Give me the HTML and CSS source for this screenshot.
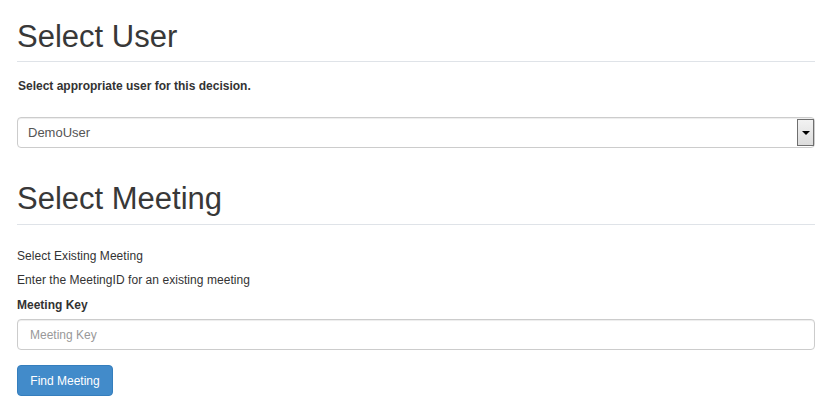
FILE: index.html
```html
<!DOCTYPE html>
<html>
<head>
<meta charset="utf-8">
<link rel="stylesheet" href="styles.css">
</head>
<body>
<div class="page">
  <h2 class="title">Select User</h2>
  <p class="lead-bold">Select appropriate user for this decision.</p>
  <div class="select">
    <span class="select-value">DemoUser</span>
    <span class="select-btn"><span class="arrow"></span></span>
  </div>

  <h2 class="title title-second">Select Meeting</h2>
  <p class="line first">Select Existing Meeting</p>
  <p class="line">Enter the MeetingID for an existing meeting</p>
  <label class="label">Meeting Key</label>
  <input class="input" type="text" placeholder="Meeting Key">
  <button class="btn" type="button">Find Meeting</button>
</div>
</body>
</html>
```
FILE: styles.css
```css
html, body {
  margin: 0;
  padding: 0;
  background: #fff;
}
body {
  font-family: "Liberation Sans", Arial, sans-serif;
  font-size: 12px;
  color: #333;
}
.page {
  padding: 0 16px 0 17px;
  display: flex;
  flex-direction: column;
  align-items: stretch;
}
.title {
  margin: 20px 0 0 0;
  padding-bottom: 8px;
  border-bottom: 1px solid #dfe3e8;
  font-size: 31px;
  font-weight: normal;
  line-height: 33px;
  color: #383838;
}
.title-second {
  margin-top: 34px;
  padding-bottom: 9px;
}
.lead-bold {
  margin: 16px 0 0 1px;
  font-weight: bold;
  line-height: 17px;
}
.select {
  margin-top: 22px;
  height: 29px;
  border: 1px solid #ccc;
  border-radius: 4px;
  display: flex;
  align-items: center;
  justify-content: space-between;
  box-shadow: inset 0 1px 1px rgba(0,0,0,0.075);
}
.select-value {
  padding-left: 10px;
  font-size: 13px;
  color: #555;
}
.select-btn {
  width: 15px;
  height: 25px;
  border: 1px solid #6f6f6f;
  background: linear-gradient(#f2f2f2, #dcdcdc);
  display: flex;
  align-items: center;
  justify-content: center;
}
.arrow {
  width: 0;
  height: 0;
  border-left: 4px solid transparent;
  border-right: 4px solid transparent;
  border-top: 4px solid #000;
}
.line {
  margin: 0 0 7px 0;
  line-height: 17px;
  letter-spacing: 0.05px;
}
.line.first {
  margin-top: 23px;
}
.label {
  margin-top: 1px;
  font-weight: bold;
  line-height: 17px;
}
.input {
  margin: 5px 0 0 0;
  height: 31px;
  box-sizing: border-box;
  border: 1px solid #ccc;
  border-radius: 4px;
  padding: 0 12px;
  font-family: "Liberation Sans", Arial, sans-serif;
  font-size: 12px;
  color: #555;
  box-shadow: inset 0 1px 1px rgba(0,0,0,0.075);
}
.input::placeholder {
  color: #999;
}
.btn {
  align-self: flex-start;
  margin-top: 15px;
  width: 96px;
  height: 31px;
  border: 1px solid #357ebd;
  border-radius: 4px;
  background: #428bca;
  color: #fff;
  font-family: "Liberation Sans", Arial, sans-serif;
  font-size: 12px;
  padding: 0;
}
```
